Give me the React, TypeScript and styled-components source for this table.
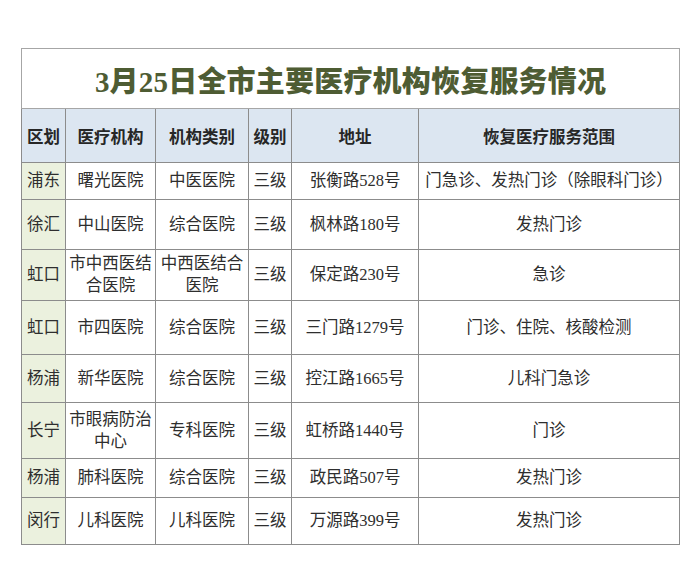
import styled, { createGlobalStyle } from "styled-components";

const GlobalStyle = createGlobalStyle`
  html, body {
    margin: 0;
    padding: 0;
    background: #ffffff;
  }
`;

type Row = {
  district: string;
  name: string;
  kind: string;
  level: string;
  address: string;
  scope: string;
  height: number;
};

const rows: Row[] = [
  { district: "浦东", name: "曙光医院", kind: "中医医院", level: "三级", address: "张衡路528号", scope: "门急诊、发热门诊（除眼科门诊）", height: 37 },
  { district: "徐汇", name: "中山医院", kind: "综合医院", level: "三级", address: "枫林路180号", scope: "发热门诊", height: 50 },
  { district: "虹口", name: "市中西医结合医院", kind: "中西医结合医院", level: "三级", address: "保定路230号", scope: "急诊", height: 51 },
  { district: "虹口", name: "市四医院", kind: "综合医院", level: "三级", address: "三门路1279号", scope: "门诊、住院、核酸检测", height: 54 },
  { district: "杨浦", name: "新华医院", kind: "综合医院", level: "三级", address: "控江路1665号", scope: "儿科门急诊", height: 48 },
  { district: "长宁", name: "市眼病防治中心", kind: "专科医院", level: "三级", address: "虹桥路1440号", scope: "门诊", height: 56 },
  { district: "杨浦", name: "肺科医院", kind: "综合医院", level: "三级", address: "政民路507号", scope: "发热门诊", height: 39 },
  { district: "闵行", name: "儿科医院", kind: "儿科医院", level: "三级", address: "万源路399号", scope: "发热门诊", height: 47 },
];

const headers = ["区划", "医疗机构", "机构类别", "级别", "地址", "恢复医疗服务范围"];
const widths = [44, 90, 93, 43, 127, 261];

export default function App() {
  return (
    <Page>
      <GlobalStyle />
      <Table>
        <colgroup>
          {widths.map((w, i) => (
            <col key={i} style={{ width: w }} />
          ))}
        </colgroup>
        <tbody>
          <tr>
            <TitleCell colSpan={6}>3月25日全市主要医疗机构恢复服务情况</TitleCell>
          </tr>
          <HeadRow>
            {headers.map((h, i) => (
              <HeadCell key={i}>{h}</HeadCell>
            ))}
          </HeadRow>
          {rows.map((r, i) => (
            <tr key={i} style={{ height: r.height }}>
              <DistrictCell>{r.district}</DistrictCell>
              <Cell>{r.name}</Cell>
              <Cell>{r.kind}</Cell>
              <Cell>{r.level}</Cell>
              <Cell>{r.address}</Cell>
              <Cell>{r.scope}</Cell>
            </tr>
          ))}
        </tbody>
      </Table>
    </Page>
  );
}

const Page = styled.div`
  width: 700px;
  height: 566px;
  padding: 48px 0 0 21px;
  box-sizing: border-box;
  font-family: "Liberation Serif", "Noto Sans CJK SC", serif;
  color: #2e2e2e;
`;

const Table = styled.table`
  border-collapse: collapse;
  table-layout: fixed;
  width: 659px;
  border: 1.5px solid #a6a6a6;
`;

const TitleCell = styled.td`
  height: 59px;
  text-align: center;
  font-size: 29px;
  font-weight: 900;
  color: #4e5c33;
  border: 1.5px solid #a6a6a6;
  padding: 0;
  letter-spacing: 0.2px;
`;

const HeadRow = styled.tr`
  height: 54px;
  background: #dce6f1;
`;

const HeadCell = styled.td`
  text-align: center;
  font-size: 16.5px;
  font-weight: 700;
  color: #262626;
  border: 1px solid #8c8c8c;
  padding: 0 2px;
`;

const Cell = styled.td`
  text-align: center;
  vertical-align: middle;
  font-size: 16.5px;
  line-height: 22px;
  border: 1px solid #8c8c8c;
  padding: 0 2px;
`;

const DistrictCell = styled(Cell)`
  background: #ebf1de;
`;
